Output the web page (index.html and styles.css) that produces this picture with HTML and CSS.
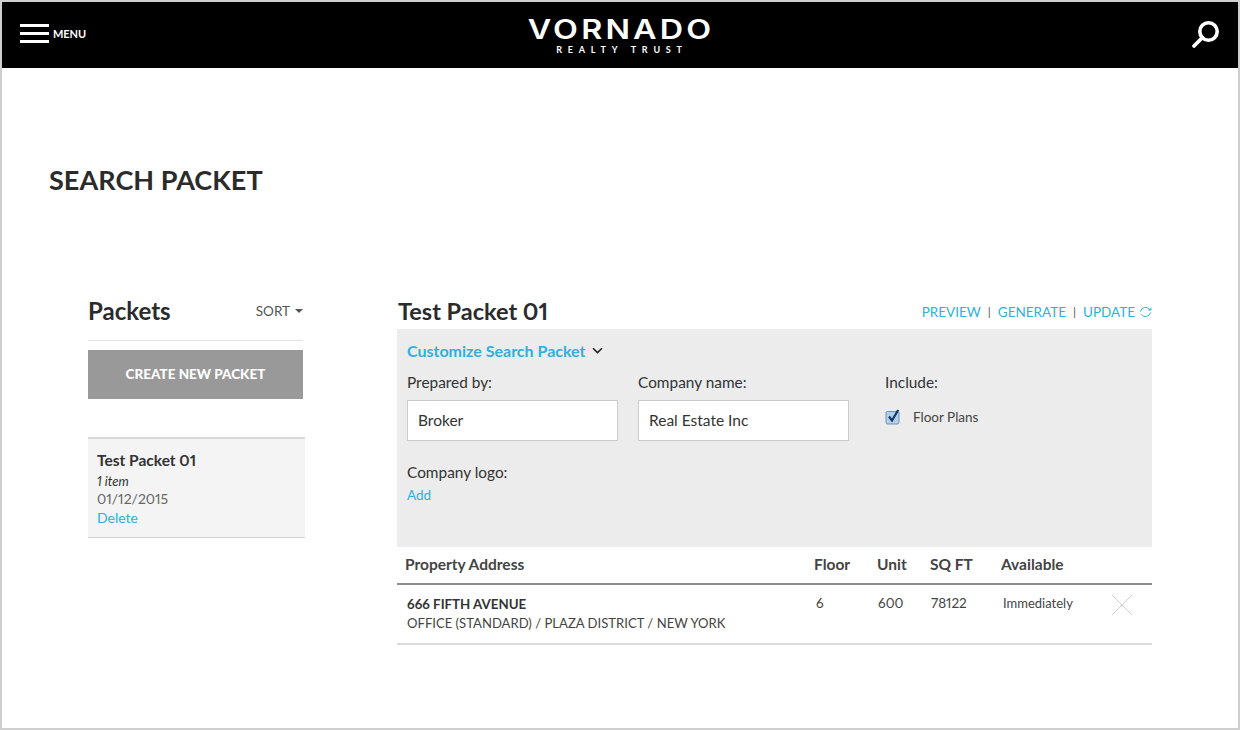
FILE: index.html
```html
<!DOCTYPE html>
<html lang="en">
<head>
<meta charset="utf-8">
<title>Search Packet</title>
<link rel="stylesheet" href="styles.css">
</head>
<body>
<div class="frame">
  <header class="topbar">
    <div class="menu">
      <span class="burger"><i></i><i></i><i></i></span>
      <span class="menu-label">MENU</span>
    </div>
    <div class="logo">
      <div class="logo-main">VORNADO</div>
      <div class="logo-sub">REALTY TRUST</div>
    </div>
    <svg class="search" width="30" height="30" viewBox="0 0 30 30" aria-label="Search">
      <circle cx="17.5" cy="11.5" r="8.7" fill="none" stroke="#fff" stroke-width="3.6"/>
      <path d="M11.5 17.5 3 26" fill="none" stroke="#fff" stroke-width="3.8" stroke-linecap="round"/>
    </svg>
  </header>
  <main class="page">
    <h1 class="page-title">SEARCH PACKET</h1>
    <div class="content">
      <aside class="sidebar">
        <div class="side-head">
          <h2 class="side-title">Packets</h2>
          <span class="sort">SORT <span class="caret"></span></span>
        </div>
        <button class="create">CREATE NEW PACKET</button>
        <div class="packet-card">
          <div class="packet-name">Test Packet 01</div>
          <div class="packet-count">1 item</div>
          <div class="packet-date">01/12/2015</div>
          <a class="link packet-delete">Delete</a>
        </div>
      </aside>
      <section class="detail">
        <div class="detail-head">
          <h2 class="detail-title">Test Packet 01</h2>
          <nav class="actions">
            <a class="link">PREVIEW</a><span class="sep">|</span><a class="link">GENERATE</a><span class="sep">|</span><a class="link">UPDATE</a>
            <svg class="refresh" width="13" height="12" viewBox="0 0 13 12">
              <path d="M1.5 5.5A5 5 0 0 1 10.6 3.6M11.5 6.5A5 5 0 0 1 2.4 8.4" fill="none" stroke="#2eb0e0" stroke-width="1"/>
              <path d="M8.8 4.4h3.6V1.6z" fill="#2eb0e0"/>
            </svg>
          </nav>
        </div>
        <div class="customize">
          <div class="customize-head">
            <a class="link customize-link">Customize Search Packet</a>
            <svg class="chev" width="11" height="7" viewBox="0 0 11 7"><path d="M1 1.2 5.5 5.6 10 1.2" fill="none" stroke="#222" stroke-width="1.6"/></svg>
          </div>
          <div class="fields">
            <div class="field">
              <label class="field-label">Prepared by:</label>
              <div class="input">Broker</div>
            </div>
            <div class="field">
              <label class="field-label">Company name:</label>
              <div class="input">Real Estate Inc</div>
            </div>
            <div class="include">
              <label class="field-label">Include:</label>
              <div class="check-row">
                <svg class="check" width="16" height="16" viewBox="0 0 16 16">
                  <rect x="1" y="2.5" width="13" height="12.5" rx="1.5" fill="#b3cfe9" stroke="#6f93b8"/>
                  <path d="M4 7.5 7 11.5 13.2 1" fill="none" stroke="#123a68" stroke-width="2.2"/>
                </svg>
                <span class="check-label">Floor Plans</span>
              </div>
            </div>
          </div>
          <div class="logo-field">
            <div class="field-label">Company logo:</div>
            <a class="link add">Add</a>
          </div>
        </div>
        <div class="table-head">
          <span class="col-address">Property Address</span>
          <span class="col-floor">Floor</span>
          <span class="col-unit">Unit</span>
          <span class="col-sqft">SQ FT</span>
          <span class="col-avail">Available</span>
        </div>
        <div class="table-row">
          <div class="cell-address">
            <div class="addr-main">666 FIFTH AVENUE</div>
            <div class="addr-sub">OFFICE (STANDARD) / PLAZA DISTRICT / NEW YORK</div>
          </div>
          <span class="cell-floor">6</span>
          <span class="cell-unit">600</span>
          <span class="cell-sqft">78122</span>
          <span class="cell-avail">Immediately</span>
          <svg class="remove" width="22" height="22" viewBox="0 0 22 22"><path d="M1 1 21 21M21 1 1 21" fill="none" stroke="#cfcfcf" stroke-width="1"/></svg>
        </div>
      </section>
    </div>
  </main>
</div>
</body>
</html>
```

FILE: styles.css
```css
* { box-sizing: border-box; }
html, body { margin: 0; padding: 0; background: #fff; }
body { font-family: "Lato", "Open Sans", sans-serif; color: #2b2b2b; font-variant-numeric: proportional-nums; }
a { text-decoration: none; }
h1, h2 { margin: 0; }

.frame { width: 1240px; height: 730px; border: 2px solid #cfcfcf; overflow: hidden; }

.topbar { height: 66px; background: #000; color: #fff; display: flex; align-items: center; justify-content: space-between; padding: 0 17px 0 18px; position: relative; }
.menu { display: flex; align-items: center; gap: 4px; padding-bottom: 4px; }
.burger { display: flex; flex-direction: column; gap: 5px; width: 29px; }
.burger i { display: block; height: 3px; background: #fff; }
.menu-label { font-size: 11px; font-weight: 700; letter-spacing: -0.1px; }
.logo { position: absolute; left: 516px; top: 13px; width: 206px; text-align: center; }
.logo-main { font-family: "Inter", "Lato", sans-serif; font-size: 26.5px; line-height: 28px; font-weight: 600; letter-spacing: 2.6px; transform: scaleX(1.22); }
.logo-sub { font-family: "Lato", sans-serif; font-size: 9px; line-height: 11px; font-weight: 700; letter-spacing: 5.8px; margin-top: 1px; padding-left: 2px; }
.search { display: block; }

.page { padding: 95px 0 0 47px; }
.page-title { font-size: 27px; line-height: 34px; font-weight: 700; color: #2b2b2b; letter-spacing: 0.05px; }
.content { display: flex; margin: 99px 0 0 39px; }

.sidebar { width: 217px; margin-right: 92px; }
.side-head { width: 215px; height: 45px; border-bottom: 1px solid #e2e2e2; display: flex; justify-content: space-between; align-items: flex-start; }
.side-title { font-size: 24px; line-height: 30px; font-weight: 700; color: #2b2b2b; }
.sort { font-size: 13.5px; line-height: 30px; color: #555; display: flex; align-items: center; gap: 5px; }
.caret { display: inline-block; width: 0; height: 0; border: 4px solid transparent; border-top-color: #555; border-bottom: 0; }
.create { display: block; width: 215px; height: 49px; margin-top: 9px; border: 0; background: #999; color: #fff; font-family: inherit; font-size: 13.5px; font-weight: 900; padding: 0 0 2px; }
.packet-card { margin-top: 38px; height: 101px; background: #f4f4f4; border-top: 2px solid #d9d9d9; border-bottom: 1px solid #cfcfcf; padding: 11px 9px; }
.packet-name { font-size: 15.5px; line-height: 20px; font-weight: 700; color: #333; }
.packet-count { font-size: 13px; line-height: 18px; font-style: italic; color: #333; margin-top: 2px; }
.packet-date { font-size: 14px; line-height: 18px; color: #666; }
.link { color: #2eb0e0; }
.packet-delete { display: block; font-size: 14px; line-height: 20px; }

.detail { width: 755px; }
.detail-head { height: 33px; display: flex; justify-content: space-between; align-items: flex-start; }
.detail-title { font-size: 23.5px; line-height: 30px; font-weight: 700; color: #2b2b2b; padding-left: 1px; }
.actions { display: flex; align-items: center; font-size: 13.5px; line-height: 32px; }
.sep { color: #555; margin: 0 7px; font-size: 12px; }
.refresh { margin-left: 4px; }

.customize { height: 218px; background: #ececec; padding: 11px 10px 0; }
.customize-head { display: flex; align-items: center; gap: 6px; height: 20px; }
.customize-link { font-size: 16px; font-weight: 700; }
.fields { display: flex; margin-top: 12px; }
.field { width: 211px; margin-right: 20px; }
.field-label { display: block; font-size: 15.4px; line-height: 20px; color: #333; }
.input { height: 41px; margin-top: 8px; background: #fff; border: 1px solid #ccc; padding: 0 10px; font-size: 15.5px; line-height: 38px; color: #333; }
.include { margin-left: 16px; }
.check-row { display: flex; align-items: center; gap: 12px; margin-top: 15px; height: 20px; }
.check { display: block; }
.check-label { font-size: 13.5px; color: #444; }
.logo-field { margin-top: 21px; }
.add { display: block; font-size: 13.5px; line-height: 20px; margin-top: 3px; }

.table-head { height: 38px; padding-bottom: 2px; border-bottom: 2px solid #8c8c8c; display: flex; align-items: center; font-size: 15.5px; font-weight: 700; color: #444; }
.col-address { width: 417px; padding-left: 8px; }
.col-floor { width: 63px; }
.col-unit { width: 53px; }
.col-sqft { width: 71px; }
.table-row { position: relative; height: 60px; border-bottom: 2px solid #dcdcdc; display: flex; padding-top: 9px; font-size: 13.5px; line-height: 20px; color: #444; }
.cell-address { width: 417px; padding-left: 10px; }
.addr-main { font-weight: 700; font-size: 13.3px; color: #333; }
.addr-sub { font-size: 13.1px; color: #444; margin-top: -1px; }
.cell-floor { width: 62px; margin: -1px 0 0 2px; }
.cell-unit { width: 53px; margin-top: -1px; }
.cell-sqft { width: 70px; margin-top: -1px; }
.cell-avail { font-size: 13px; margin: -1px 0 0 2px; }
.remove { position: absolute; left: 714px; top: 9px; }
```
